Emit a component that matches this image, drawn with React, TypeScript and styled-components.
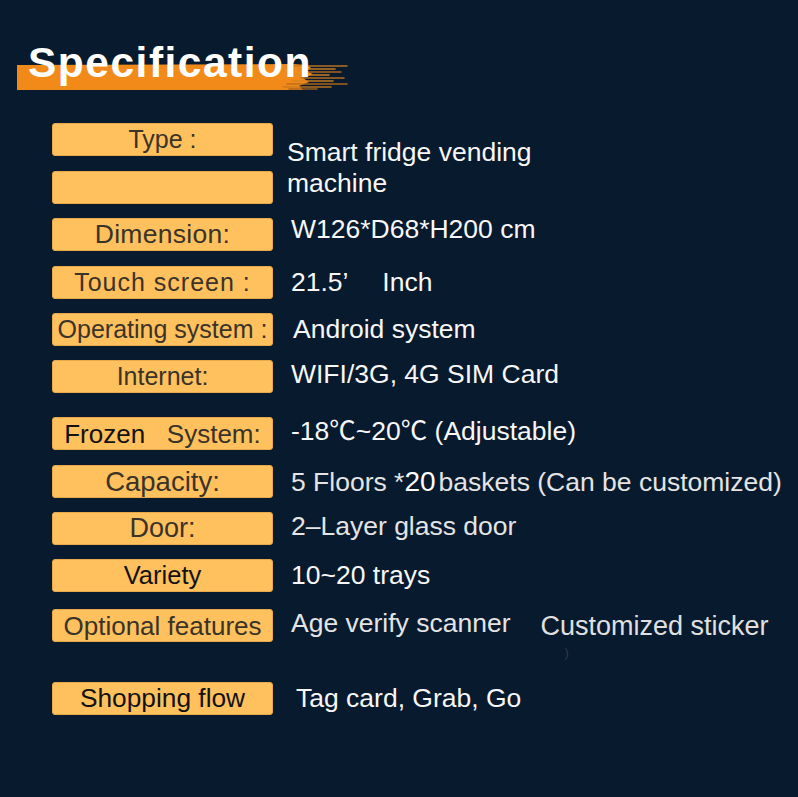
import React from "react";
import styled, { createGlobalStyle } from "styled-components";

const GlobalStyle = createGlobalStyle`
  html, body { margin: 0; padding: 0; background: #081a2d; }
  body { font-family: "Liberation Sans", "Noto Sans CJK SC", sans-serif; }
  #root { min-height: 797px; }
`;

const Page = styled.div`
  width: 798px;
  min-height: 797px;
  background: #081a2d;
  overflow: hidden;
`;

const Header = styled.header`
  position: relative;
  height: 123px;
  box-sizing: border-box;
  padding: 42px 0 0 28px;
`;

const Brush = styled.svg`
  position: absolute;
  left: 17px;
  top: 63px;
`;

const Title = styled.h1`
  position: relative;
  z-index: 1;
  margin: 0;
  font-family: "Liberation Sans", sans-serif;
  font-weight: 700;
  font-size: 42.5px;
  line-height: 42px;
  letter-spacing: 1.5px;
  color: #ffffff;
`;

const List = styled.div`
  display: flex;
  flex-direction: column;
  padding-left: 52px;
`;

const Row = styled.div<{ $gap: number }>`
  display: grid;
  grid-template-columns: 221px 1fr;
  grid-template-rows: 33px;
  column-gap: 18px;
  align-items: center;
  margin-top: ${(p) => p.$gap}px;
`;

const TypeRow = styled.div`
  display: grid;
  grid-template-columns: 221px 1fr;
  column-gap: 18px;
`;

const LabelStack = styled.div`
  display: flex;
  flex-direction: column;
  gap: 15px;
`;

const Label = styled.div<{ $size?: number; $dark?: boolean; $ls?: number }>`
  height: 33px;
  box-sizing: border-box;
  background: #ffc05e;
  border: 1px solid #e9a94a;
  border-radius: 3px;
  display: flex;
  align-items: center;
  justify-content: center;
  font-family: "Liberation Sans", sans-serif;
  font-size: ${(p) => p.$size ?? 25}px;
  line-height: 1;
  letter-spacing: ${(p) => p.$ls ?? 0}px;
  color: ${(p) => (p.$dark ? "#121212" : "#3a3328")};
  white-space: pre;
  overflow: visible;
`;

const Muted = styled.span`
  color: #3a3328;
`;

const Value = styled.div<{ $lift?: number; $shift?: number; $grey?: boolean }>`
  font-family: "Liberation Sans", "Noto Sans CJK SC", sans-serif;
  font-size: 26.5px;
  line-height: 33px;
  color: ${(p) => (p.$grey ? "#e4e4e4" : "#f7f7f7")};
  white-space: pre;
  margin-left: ${(p) => p.$shift ?? 0}px;
  margin-bottom: ${(p) => (p.$lift ?? 0) * 2}px;
`;

const TypeValue = styled.div`
  font-family: "Liberation Sans", sans-serif;
  font-size: 26.5px;
  line-height: 31px;
  color: #f7f7f7;
  margin-top: 14px;
  margin-left: -4px;
`;

const Strong = styled.span`
  font-size: 28px;
  color: #ffffff;
  margin-right: 3px;
`;

const Sticker = styled.span`
  position: relative;
  display: inline-block;
  margin-left: 30px;
  font-size: 27px;
  color: #e0e0e0;
  vertical-align: top;
  transform: translateY(3px);
`;

const Stray = styled.span`
  position: absolute;
  left: 24px;
  top: 36px;
  font-size: 13px;
  line-height: 13px;
  color: #2c3a4a;
`;

const streaks = [
  { y: 3, x1: 276, x2: 330, c: "#c77a22" },
  { y: 6, x1: 282, x2: 318, c: "#d98420" },
  { y: 9, x1: 286, x2: 324, c: "#b96f1e" },
  { y: 12, x1: 280, x2: 312, c: "#e08a22" },
  { y: 15, x1: 284, x2: 327, c: "#c27520" },
  { y: 18, x1: 276, x2: 316, c: "#d5821f" },
  { y: 21, x1: 270, x2: 330, c: "#b86c1d" },
  { y: 24, x1: 266, x2: 314, c: "#c97b20" },
  { y: 26, x1: 272, x2: 300, c: "#a8641c" },
];

function BrushStroke() {
  return (
    <Brush width="334" height="29" viewBox="0 0 334 29">
      <path
        d="M0,2 L276,1 L290,2 L294,5 L288,8 L296,11 L286,15 L292,19 L282,23 L286,27 L0,27 Z"
        fill="#f28a1a"
      />
      {streaks.map((s, i) => (
        <line
          key={i}
          x1={s.x1}
          y1={s.y}
          x2={s.x2}
          y2={s.y}
          stroke={s.c}
          strokeWidth={1.6}
          strokeLinecap="round"
          opacity={0.9}
        />
      ))}
    </Brush>
  );
}

export default function App() {
  return (
    <Page>
      <GlobalStyle />
      <Header>
        <BrushStroke />
        <Title>Specification</Title>
      </Header>
      <List>
        <TypeRow>
          <LabelStack>
            <Label $size={25}>Type :</Label>
            <Label />
          </LabelStack>
          <TypeValue>
            Smart fridge vending
            <br />
            machine
          </TypeValue>
        </TypeRow>
        <Row $gap={14}>
          <Label $size={26.5} $ls={0.3}>Dimension:</Label>
          <Value $lift={5}>W126*D68*H200 cm</Value>
        </Row>
        <Row $gap={15}>
          <Label $size={25} $ls={1}>Touch screen :</Label>
          <Value>21.5’{"\u2003"} Inch</Value>
        </Row>
        <Row $gap={14}>
          <Label $size={25}>Operating system :</Label>
          <Value $shift={2}>Android system</Value>
        </Row>
        <Row $gap={14}>
          <Label $size={25}>Internet:</Label>
          <Value $lift={2}>WIFI/3G, 4G SIM Card</Value>
        </Row>
        <Row $gap={24}>
          <Label $size={26} $dark>
            Frozen{"   "}<Muted>System:</Muted>
          </Label>
          <Value $lift={2}>-18℃~20℃ (Adjustable)</Value>
        </Row>
        <Row $gap={15}>
          <Label $size={27.5}>Capacity:</Label>
          <Value $grey>
            5 Floors *<Strong>20</Strong>baskets (Can be customized)
          </Value>
        </Row>
        <Row $gap={14}>
          <Label $size={27}>Door:</Label>
          <Value $lift={2} $grey>2–Layer glass door</Value>
        </Row>
        <Row $gap={14}>
          <Label $size={25.5} $dark>Variety</Label>
          <Value>10~20 trays</Value>
        </Row>
        <Row $gap={17}>
          <Label $size={26}>Optional features</Label>
          <Value $lift={2} $grey>
            Age verify scanner
            <Sticker>
              Customized sticker
              <Stray>)</Stray>
            </Sticker>
          </Value>
        </Row>
        <Row $gap={40}>
          <Label $size={26.3} $dark>Shopping flow</Label>
          <Value $shift={5}>Tag card, Grab, Go</Value>
        </Row>
      </List>
    </Page>
  );
}
